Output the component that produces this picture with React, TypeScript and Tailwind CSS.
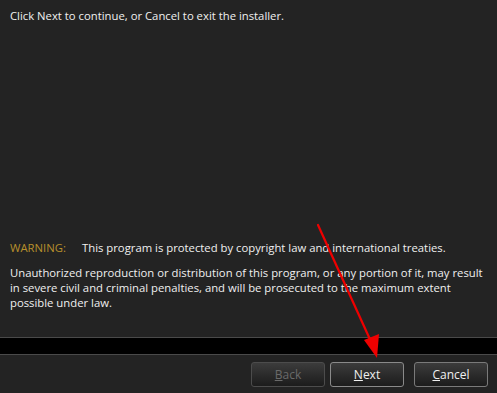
import React from 'react';

const btnBase =
  'w-[74px] h-[25px] rounded-[3px] border text-[12px] flex items-center justify-center bg-gradient-to-b from-[#3c3c3c] to-[#1c1c1c]';

export default function App() {
  return (
    <div
      className="relative w-[497px] h-[393px] bg-[#232323] flex flex-col text-[#f0f0f0] text-[11.3px] overflow-hidden"
      style={{ fontFamily: '"Open Sans", "Noto Sans", sans-serif' }}
    >
      <div className="flex-1 flex flex-col px-[10px] pt-[8px] pb-[27px]">
        <p className="leading-[15px] whitespace-nowrap">Click Next to continue, or Cancel to exit the installer.</p>
        <div className="mt-auto">
          <div className="flex leading-[15px] whitespace-nowrap">
            <span className="w-[72px] text-[#b8902c]">WARNING:</span>
            <span>This program is protected by copyright law and international treaties.</span>
          </div>
          <p className="mt-[10px] leading-[15px] whitespace-nowrap">
            Unauthorized reproduction or distribution of this program, or any portion of it, may result
            <br />
            in severe civil and criminal penalties, and will be prosecuted to the maximum extent
            <br />
            possible under law.
          </p>
        </div>
      </div>
      <div className="h-[18px] bg-black border-y border-[#4a4a4a]" />
      <div className="h-[38px] flex items-center justify-end pr-[9px] pt-[1px]">
        <button className={`${btnBase} border-[#4c4c4c] text-[#6a6a6a]`}>
          <span><u>B</u>ack</span>
        </button>
        <button className={`${btnBase} ml-[5px] border-[#8a8a8a]`}>
          <span><u>N</u>ext</span>
        </button>
        <button className={`${btnBase} ml-[10px] border-[#7a7a7a]`}>
          <span><u>C</u>ancel</span>
        </button>
      </div>
      <svg className="absolute inset-0 pointer-events-none" width="497" height="393">
        <line x1="318" y1="225" x2="373" y2="346" stroke="#ee0000" strokeWidth="2.2" strokeLinecap="round" />
        <polygon points="377,358 364,340 379,334" fill="#ee0000" />
      </svg>
    </div>
  );
}
